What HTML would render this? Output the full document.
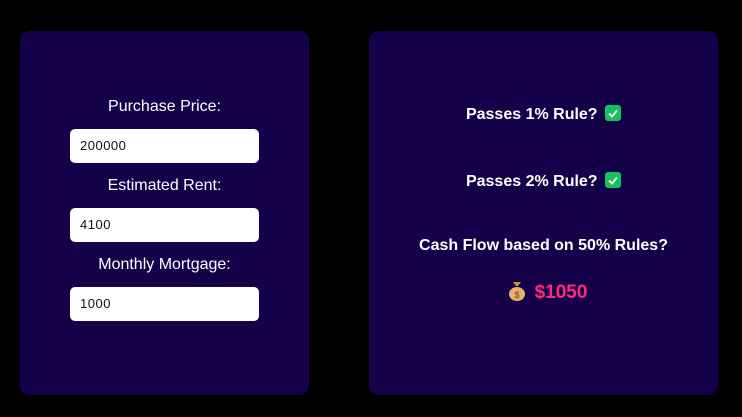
<!DOCTYPE html><html><head><style>
body{margin:0;width:742px;height:417px;background:#000;font-family:"Liberation Sans",sans-serif;position:relative;overflow:hidden}
.p{position:absolute;background:#15004a;border-radius:10px;top:31px;height:364px}
.l{position:absolute;left:0;width:289px;text-align:center;color:#fff;font-size:16px}
.i{position:absolute;left:50px;width:189px;height:34px;background:#fff;border-radius:5px;font-size:13px;color:#111;line-height:34px;padding-left:10px;box-sizing:border-box;letter-spacing:.5px}
.t{position:absolute;left:0;width:349px;text-align:center;color:#fff;font-size:16px;font-weight:bold}
.ck{display:inline-block;width:16px;height:16px;background:#12c25a;border-radius:3px;vertical-align:-2px;margin-left:3px;position:relative}
</style></head><body>
<div class="p" style="left:20px;width:289px">
<div class="l" style="top:67px">Purchase Price:</div>
<div class="i" style="top:98px">200000</div>
<div class="l" style="top:146px">Estimated Rent:</div>
<div class="i" style="top:177px">4100</div>
<div class="l" style="top:225px">Monthly Mortgage:</div>
<div class="i" style="top:256px">1000</div>
</div>
<div class="p" style="left:369px;width:349px">
<div class="t" style="top:74px">Passes 1% Rule? <span class="ck"><svg width="16" height="16" style="position:absolute;left:0;top:0"><path d="M4 8.5l3 3 5-6" stroke="#fff" stroke-width="1.8" fill="none"/></svg></span></div>
<div class="t" style="top:141px">Passes 2% Rule? <span class="ck"><svg width="16" height="16" style="position:absolute;left:0;top:0"><path d="M4 8.5l3 3 5-6" stroke="#fff" stroke-width="1.8" fill="none"/></svg></span></div>
<div class="t" style="top:206px">Cash Flow based on 50% Rules?</div>
<div class="t" style="top:250px;font-size:19px;color:#ff2a78;padding-left:8px;box-sizing:border-box"><svg width="18" height="20" style="vertical-align:-3px;margin-right:9px"><path d="M5 1h8l-3 4h-2z" fill="#c98f4e"/><ellipse cx="9" cy="13" rx="8" ry="7" fill="#e8b06c"/><text x="9" y="17" font-size="9" text-anchor="middle" fill="#8a5a2a" font-family="Liberation Sans">$</text></svg>$1050</div>
</div>
</body></html>
